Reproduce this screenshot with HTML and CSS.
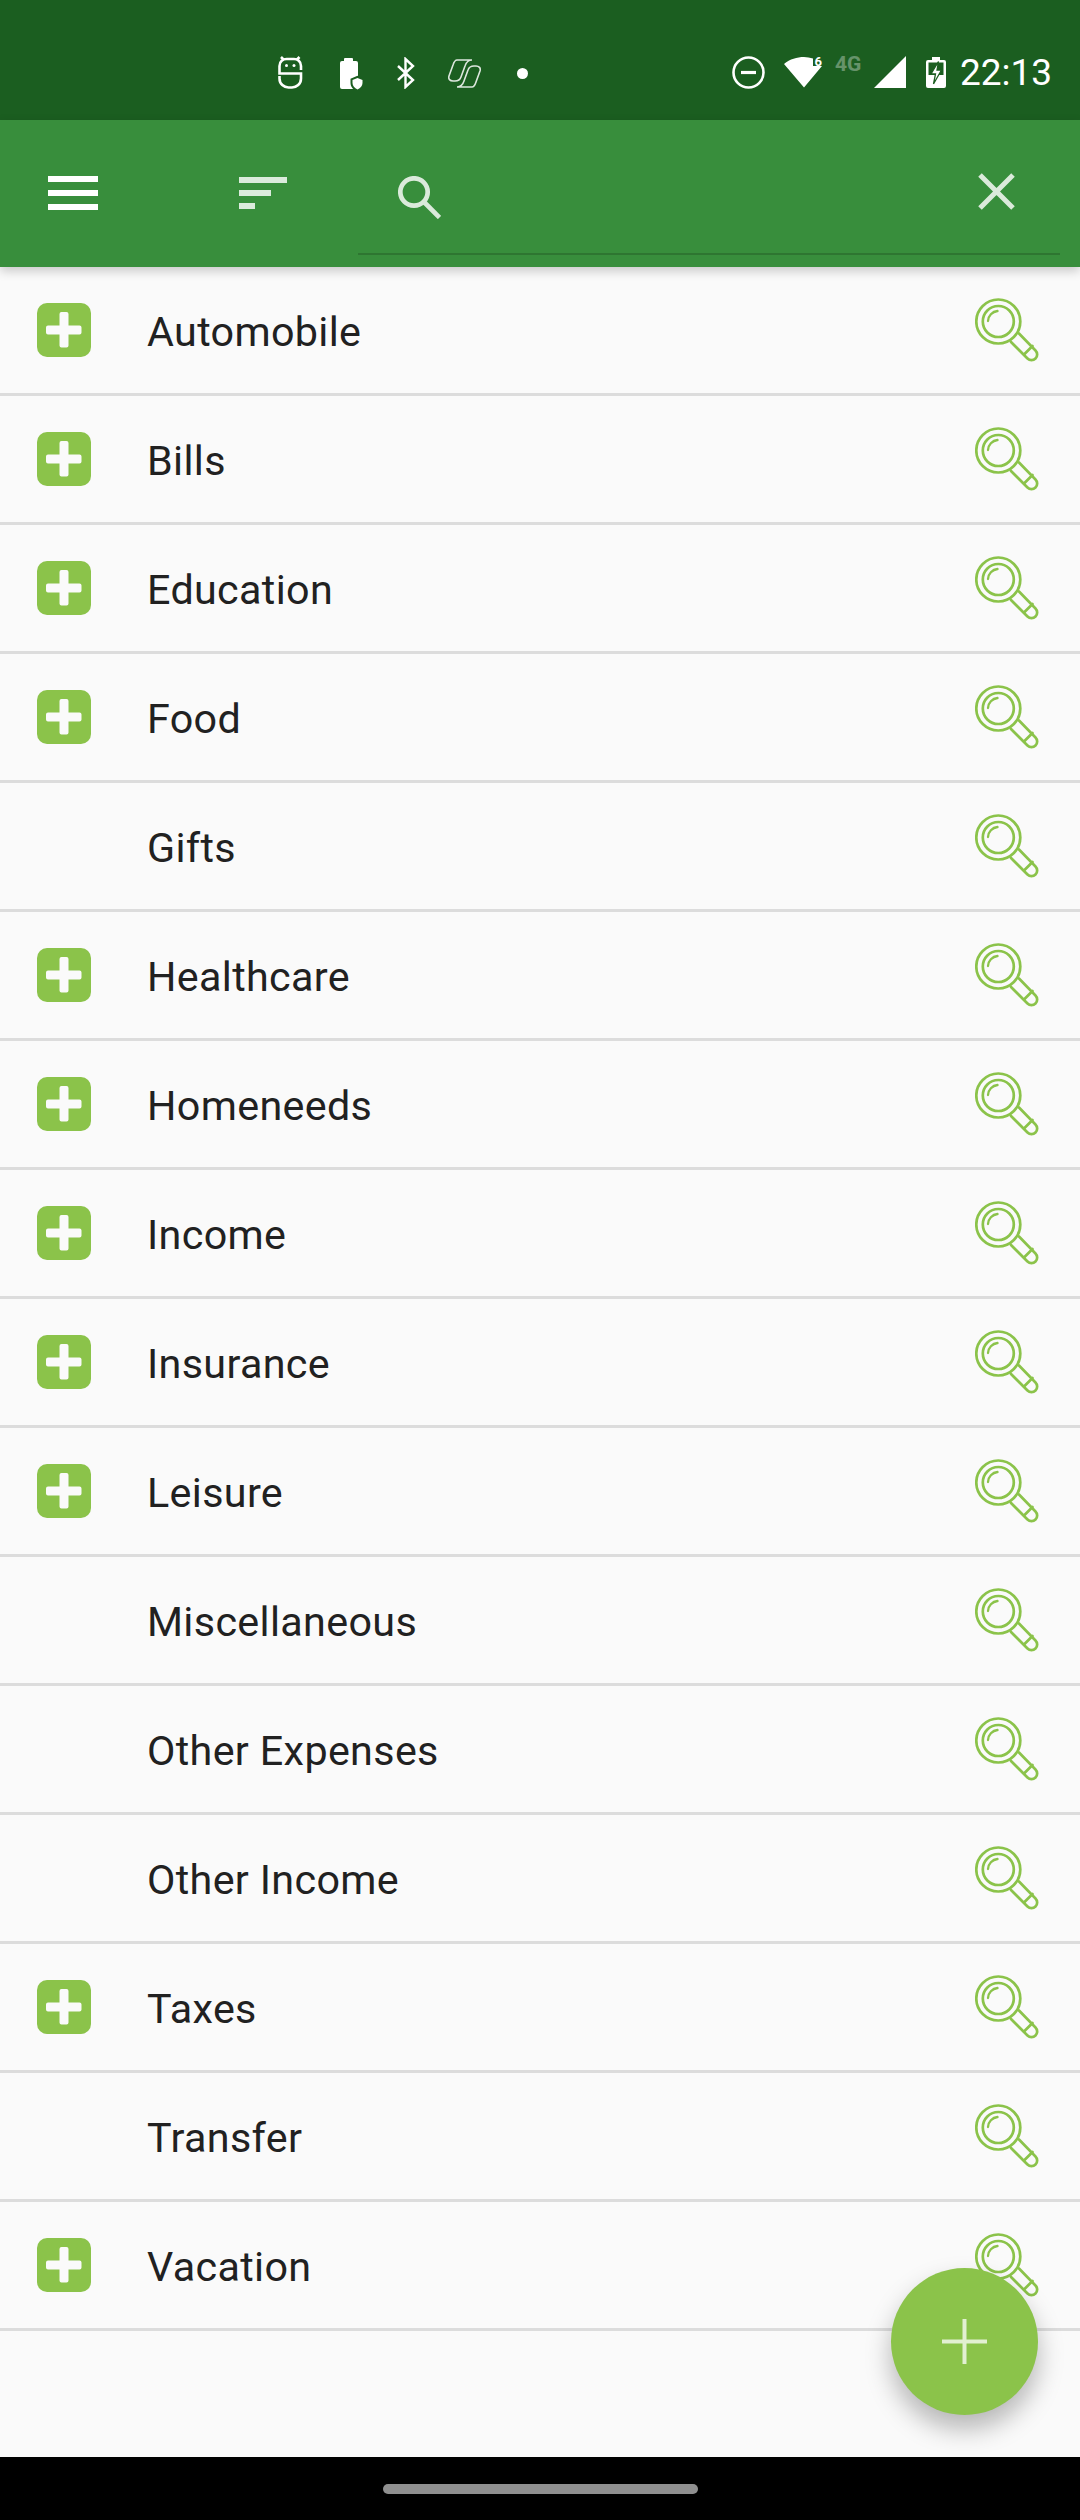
FILE: index.html
```html
<!DOCTYPE html>
<html lang="en">
<head>
  <meta charset="UTF-8" />
  <meta name="viewport" content="width=device-width, initial-scale=1.0"/>
  <title>Categories</title>
  <link rel="stylesheet" href="styles.css">
</head>

<body>
  <svg class="defs" width="0" height="0">
    <symbol id="lens" viewBox="0 0 64 64">
      <g fill="none" stroke="#8bc34a" stroke-width="2.700" stroke-linecap="round">
        <circle cx="23.3" cy="23.5" r="22"/>
        <circle cx="23.3" cy="23.5" r="15.500"/>
        <path d="M13 23a10.500 10.500 0 0 1 9.500-10" stroke-width="2.300"/>
        <path d="M36 44l16.500 16.500a5.600 5.600 0 0 0 8-8l-16.500-17"/>
        <path d="M49 56.500l8.500-8.500"/>
      </g>
    </symbol>
    <symbol id="expand" viewBox="0 0 54 54">
      <rect width="54" height="54" rx="10" fill="#8bc34a"/>
      <path d="M24.500 9h5a2 2 0 0 1 2 2v11.500h11a2 2 0 0 1 2 2v5a2 2 0 0 1-2 2h-11v11a2 2 0 0 1-2 2h-5a2 2 0 0 1-2-2v-11h-11.500a2 2 0 0 1-2-2v-5a2 2 0 0 1 2-2h11.500v-11.500a2 2 0 0 1 2-2z" fill="#fafafa"/>
    </symbol>
  </svg>

  <!-- android status bar -->
  <div class="statusbar">
    <div class="status-left">
      <svg class="st-robot" width="25" height="33" viewBox="0 0 25 33" fill="none" stroke="#fff" stroke-width="2.600">
        <path d="M3 1l3 3M21.500 1l-3 3"/>
        <path d="M23 14V10C23 5.500 19.500 3 16 3H8.500C5 3 1.500 5.500 1.500 10V17.500H23V22.500C23 28 18.500 31.500 14 31.500H10.500C6 31.500 1.500 28 1.500 22.500V20"/>
        <circle cx="8.500" cy="9.500" r="1.500" fill="#fff" stroke="none"/>
        <circle cx="16" cy="9.500" r="1.500" fill="#fff" stroke="none"/>
      </svg>
      <svg class="st-shield" width="24" height="32" viewBox="0 0 24 32">
        <path d="M6 0h7a1 1 0 0 1 1 1v2h3a2 2 0 0 1 2 2v26h-16a2 2 0 0 1-2-2v-24a2 2 0 0 1 2-2h2v-2a1 1 0 0 1 1-1z" fill="#fff"/>
        <path d="M18.500 20l5 2v3c0 3-2 5-5 6.500-3-1.500-5-3.500-5-6.500v-3z" fill="#fff" stroke="#1b5e20" stroke-width="4" paint-order="stroke"/>
      </svg>
      <svg class="st-bt" width="18" height="32" viewBox="0 0 18 32" fill="none" stroke="#fff" stroke-width="2.400">
        <path d="M1 9l15 14-7.500 7v-28l7.500 7-15 14"/>
      </svg>
      <svg class="st-copilot" width="33" height="29" viewBox="0 0 33 29" fill="none" stroke="#fff" stroke-width="1.600" opacity="0.85">
        <path d="M9 1H24C20 1 18 4 17 7L13 18C12 21 10 22 7 22H5C2 22 0 20 1 17L5 6C6 3 7 1 9 1Z"/>
        <path d="M24 28H9C13 28 15 25 16 22L20 11C21 8 23 7 26 7H28C31 7 33 9 32 12L28 23C27 26 26 28 24 28Z"/>
      </svg>
      <span class="status-dot"></span>
    </div>
    <div class="status-right">
      <svg class="st-dnd" width="33" height="33" viewBox="0 0 33 33" fill="none" stroke="#fff" stroke-width="2.600">
        <circle cx="16.500" cy="16.500" r="15"/>
        <path d="M9 16.500h15" stroke-width="3.200"/>
      </svg>
      <div class="wifi">
        <svg width="38" height="32" viewBox="0 0 38 32">
          <path d="M0 8C6 3 13 1 20 1C23 1 26 1.500 29 2.500V10H38L20 31.500Z" fill="#fff"/>
        </svg>
        <span class="wifi-num">6</span>
      </div>
      <span class="net">4G</span>
      <svg class="st-signal" width="32" height="32" viewBox="0 0 32 32">
        <path d="M32 0v32h-32z" fill="#fff"/>
      </svg>
      <svg class="st-batt" width="20" height="31" viewBox="0 0 20 31">
        <path d="M6 0h8v3h4a2 2 0 0 1 2 2v24a2 2 0 0 1-2 2h-16a2 2 0 0 1-2-2v-24a2 2 0 0 1 2-2h4z" fill="#fff"/>
        <path d="M2.500 5.500h15v12.500h-15z" fill="#1b5e20"/>
        <path d="M12.500 4.500L5 17H9.500L7.500 27L15.500 13H11Z" fill="#fff" stroke="#1b5e20" stroke-width="1.300"/>
      </svg>
      <span class="clock">22:13</span>
    </div>
  </div>

  <!-- toolbar with search box -->
  <header class="toolbar">
    <div class="menu-btn"><span></span><span></span><span></span></div>
    <div class="sort-btn"><span class="s1"></span><span class="s2"></span><span class="s3"></span></div>
    <div class="searchbox">
      <svg class="search-ic" width="43" height="43" viewBox="0 0 43 43" fill="none" stroke="#fff" stroke-width="4.700">
        <circle cx="16" cy="16" r="13.700"/>
        <path d="M26 26l15.500 15.500"/>
      </svg>
      <svg class="close-ic" width="37" height="37" viewBox="0 0 37 37" fill="none" stroke="#fff" stroke-width="5">
        <path d="M2 2l33 33M35 2l-33 33"/>
      </svg>
    </div>
  </header>

  <main class="list">
    <div class="row"><svg class="expand"><use href="#expand"/></svg><span class="name">Automobile</span><svg class="lens"><use href="#lens"/></svg></div>
    <div class="row"><svg class="expand"><use href="#expand"/></svg><span class="name">Bills</span><svg class="lens"><use href="#lens"/></svg></div>
    <div class="row"><svg class="expand"><use href="#expand"/></svg><span class="name">Education</span><svg class="lens"><use href="#lens"/></svg></div>
    <div class="row"><svg class="expand"><use href="#expand"/></svg><span class="name">Food</span><svg class="lens"><use href="#lens"/></svg></div>
    <div class="row"><span class="name">Gifts</span><svg class="lens"><use href="#lens"/></svg></div>
    <div class="row"><svg class="expand"><use href="#expand"/></svg><span class="name">Healthcare</span><svg class="lens"><use href="#lens"/></svg></div>
    <div class="row"><svg class="expand"><use href="#expand"/></svg><span class="name">Homeneeds</span><svg class="lens"><use href="#lens"/></svg></div>
    <div class="row"><svg class="expand"><use href="#expand"/></svg><span class="name">Income</span><svg class="lens"><use href="#lens"/></svg></div>
    <div class="row"><svg class="expand"><use href="#expand"/></svg><span class="name">Insurance</span><svg class="lens"><use href="#lens"/></svg></div>
    <div class="row"><svg class="expand"><use href="#expand"/></svg><span class="name">Leisure</span><svg class="lens"><use href="#lens"/></svg></div>
    <div class="row"><span class="name">Miscellaneous</span><svg class="lens"><use href="#lens"/></svg></div>
    <div class="row"><span class="name">Other Expenses</span><svg class="lens"><use href="#lens"/></svg></div>
    <div class="row"><span class="name">Other Income</span><svg class="lens"><use href="#lens"/></svg></div>
    <div class="row"><svg class="expand"><use href="#expand"/></svg><span class="name">Taxes</span><svg class="lens"><use href="#lens"/></svg></div>
    <div class="row"><span class="name">Transfer</span><svg class="lens"><use href="#lens"/></svg></div>
    <div class="row"><svg class="expand"><use href="#expand"/></svg><span class="name">Vacation</span><svg class="lens"><use href="#lens"/></svg></div>
  </main>

  <div class="fab">
    <svg width="45" height="45" viewBox="0 0 45 45" fill="none" stroke="#fff" stroke-opacity="0.75" stroke-width="4">
      <path d="M22.500 0v45M0 22.500h45"/>
    </svg>
  </div>

  <div class="navbar"><div class="nav-pill"></div></div>
</body>
</html>
```

FILE: styles.css
```css
* {
  margin: 0;
  padding: 0;
  box-sizing: border-box;
}

body {
  font-family: Roboto, 'Noto Sans', sans-serif;
  background: #fafafa;
  color: #212121;
  width: 1080px;
  height: 2520px;
  display: flex;
  flex-direction: column;
  overflow: hidden;
  position: relative;
}

.defs {
  position: absolute;
}

svg {
  display: block;
  flex: none;
}

/* status bar */
.statusbar {
  height: 120px;
  flex: none;
  background: #1b5e20;
  color: white;
  display: flex;
  align-items: flex-start;
  padding: 56px 0 0 278px;
}
.status-left {
  display: flex;
  align-items: flex-start;
  width: 454px;
}
.st-shield {
  margin-left: 36px;
  margin-top: 2px;
}
.st-bt {
  margin-left: 34px;
  margin-top: 1px;
}
.st-copilot {
  margin-left: 33px;
  margin-top: 3px;
}
.status-dot {
  width: 11px;
  height: 11px;
  margin-left: 36px;
  margin-top: 12px;
  border-radius: 50%;
  background: white;
}
.status-right {
  display: flex;
  align-items: flex-start;
}
.wifi {
  position: relative;
  width: 37px;
  margin-left: 19px;
}
.wifi-num {
  position: absolute;
  top: -2px;
  right: -1px;
  font-size: 13px;
  line-height: 16px;
  font-weight: 700;
}
.net {
  margin-left: 14px;
  width: 39px;
  font-size: 21px;
  line-height: 17px;
  font-weight: 700;
  color: white;
  opacity: 0.33;
}
.st-batt {
  margin-left: 20px;
  margin-top: 1px;
}
.clock {
  margin-left: 14px;
  font-size: 37px;
  line-height: 34px;
}

/* toolbar */
.toolbar {
  height: 147px;
  flex: none;
  background: #388e3c;
  display: flex;
  align-items: flex-start;
  padding-left: 48px;
  box-shadow: 0 4px 10px rgba(0, 0, 0, 0.2);
  position: relative;
  z-index: 2;
}
.menu-btn {
  width: 50px;
  margin-top: 56px;
  display: flex;
  flex-direction: column;
  gap: 8.700px;
}
.menu-btn span {
  height: 5.500px;
  background: white;
}
.sort-btn {
  width: 48px;
  margin-top: 57px;
  margin-left: 141px;
  display: flex;
  flex-direction: column;
  gap: 7.500px;
}
.sort-btn span {
  height: 5.500px;
  background: rgba(255, 255, 255, 0.82);
}
.sort-btn .s1 {
  width: 48px;
}
.sort-btn .s2 {
  width: 32px;
}
.sort-btn .s3 {
  width: 16px;
}
.searchbox {
  width: 702px;
  height: 135px;
  margin-left: 71px;
  padding: 56px 45px 0 40px;
  border-bottom: 2px solid rgba(0, 0, 0, 0.17);
  display: flex;
  align-items: flex-start;
  justify-content: space-between;
}
.search-ic, .close-ic {
  opacity: 0.82;
}
.close-ic {
  margin-top: -3px;
}

/* category rows */
.list {
  flex: 1;
}
.row {
  height: 129px;
  border-bottom: 3px solid #dcdcdc;
  display: flex;
  align-items: center;
  padding-left: 147px;
  position: relative;
}
.expand {
  width: 54px;
  height: 54px;
  position: absolute;
  left: 37px;
  top: 36px;
}
.name {
  flex: 1;
  font-size: 41.250px;
  letter-spacing: 0.35px;
  margin-top: 3px;
}
.lens {
  width: 64px;
  height: 64px;
  margin-right: 41px;
}

/* floating add button */
.fab {
  position: absolute;
  left: 891px;
  top: 2268px;
  width: 147px;
  height: 147px;
  border-radius: 50%;
  background: #8bc34a;
  box-shadow: 0 14px 26px rgba(0, 0, 0, 0.28);
  display: flex;
  align-items: center;
  justify-content: center;
  z-index: 3;
}

/* gesture bar */
.navbar {
  height: 63px;
  flex: none;
  background: black;
  display: flex;
  justify-content: center;
  padding-top: 27px;
}
.nav-pill {
  width: 315px;
  height: 10px;
  border-radius: 5px;
  background: #8f8f8f;
}
```
